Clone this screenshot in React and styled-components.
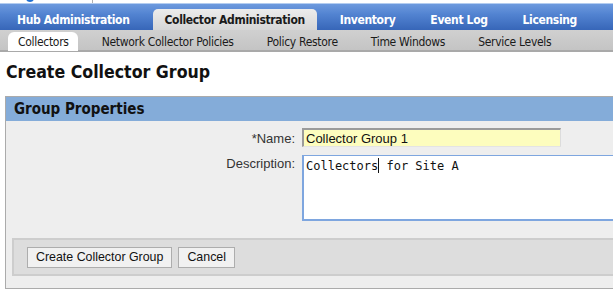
import React from "react";
import styled, { createGlobalStyle } from "styled-components";

const TAHOMA = `"DejaVu Sans Condensed", "DejaVu Sans", sans-serif`;
const ARIAL = `"Liberation Sans", Arial, sans-serif`;
const MONO = `"DejaVu Sans Mono", "Liberation Mono", monospace`;

const Global = createGlobalStyle`
  html, body { margin: 0; padding: 0; background: #ffffff; overflow: hidden; }
  body { font-family: ${TAHOMA}; color: #111; }
  * { box-sizing: border-box; }
`;

const Page = styled.div`
  width: 613px;
  height: 291px;
  overflow: hidden;
  display: flex;
  flex-direction: column;
`;

const TopStrip = styled.div`
  height: 3px;
  overflow: hidden;
  background: #fff;
  display: flex;
`;

const MainTabs = styled.nav`
  height: 27px;
  display: flex;
  align-items: flex-end;
  gap: 11px;
  padding-left: 5px;
  border-top: 1px solid #b4cdf0;
  background: linear-gradient(#6d9ade, #5283d1 40%, #3766b8);
`;

const MainTab = styled.div`
  height: 21px;
  padding: 0 12px;
  display: flex;
  align-items: center;
  font-family: ${TAHOMA};
  font-weight: bold;
  font-size: 12px;
  letter-spacing: -0.35px;
  white-space: nowrap;
  border-radius: 5px 5px 0 0;
  color: ${(p) => (p.$active ? "#1a1a1a" : "#ffffff")};
  background: ${(p) => (p.$active ? "linear-gradient(#ececec, #d6d6d6)" : "transparent")};
`;

const SubTabs = styled.nav`
  height: 22px;
  display: flex;
  align-items: flex-end;
  gap: 14px;
  padding-left: 8px;
  background: linear-gradient(#d0d0d0, #c4c4c4);
  border-bottom: 2px solid #a9a9a9;
`;

const SubTab = styled.div`
  height: 19px;
  margin-bottom: -1px;
  padding: 0 9px 0 10px;
  display: flex;
  align-items: center;
  font-family: ${TAHOMA};
  font-size: 12px;
  letter-spacing: -0.3px;
  white-space: nowrap;
  color: #1a1a1a;
  border-radius: 6px 6px 0 0;
  background: ${(p) => (p.$active ? "#ffffff" : "transparent")};
`;

const Title = styled.h1`
  margin: 0;
  padding: 8px 6px 0;
  height: 44px;
  line-height: 24px;
  font-family: ${TAHOMA};
  font-size: 17.6px;
  font-weight: bold;
  color: #111;
`;

const Panel = styled.section`
  margin-left: 5px;
  width: 660px;
  border: 1px solid #ababab;
  background: #eeeeee;
`;

const PanelHeader = styled.h2`
  margin: 0;
  height: 24px;
  line-height: 24px;
  padding-left: 8px;
  background: #84acd9;
  font-family: ${TAHOMA};
  font-size: 15px;
  font-weight: bold;
  color: #111;
`;

const PanelBody = styled.div`
  padding: 7px 0 12px 6px;
`;

const Form = styled.div`
  display: grid;
  grid-template-columns: 283px auto;
  column-gap: 7px;
  row-gap: 8px;
  align-items: start;
  margin-bottom: 17px;
`;

const Label = styled.label`
  text-align: right;
  font-family: ${ARIAL};
  font-size: 13px;
  color: #333;
  padding-top: ${(p) => p.$top}px;
`;

const TextInput = styled.input`
  width: 259px;
  height: 19px;
  margin: 0;
  padding: 0 0 0 2px;
  font-family: ${ARIAL};
  font-size: 13px;
  color: #111;
  background: #fdfdbe;
  border-style: solid;
  border-width: 2px 1px 1px 2px;
  border-color: #9b9b9b #dcdcdc #e4e4e4 #9b9b9b;
  outline: none;
`;

const TextArea = styled.div`
  width: 330px;
  height: 66px;
  padding: 2px 2px;
  font-family: ${MONO};
  font-size: 12px;
  line-height: 16px;
  color: #111;
  background: #ffffff;
  border: 2px solid #7ea6df;
  border-width: 1px 2px 2px 2px;
  white-space: pre;
`;

const Caret = styled.span`
  display: inline-block;
  width: 1px;
  height: 15px;
  background: #111;
  vertical-align: -3px;
`;

const ButtonBar = styled.div`
  height: 38px;
  display: flex;
  align-items: center;
  gap: 6px;
  padding-left: 13px;
  background: #dddddd;
  border: 2px solid #cdcdcd;
`;

const Button = styled.button`
  height: 21px;
  margin: 0;
  padding: 0 8px;
  font-family: ${ARIAL};
  font-size: 12.4px;
  color: #111;
  background: #f1f1f1;
  border: 1px solid #adadad;
  border-radius: 0;
`;

export default function App() {
  const mainTabs = ["Hub Administration", "Collector Administration", "Inventory", "Event Log", "Licensing"];
  const subTabs = ["Collectors", "Network Collector Policies", "Policy Restore", "Time Windows", "Service Levels"];
  return (
    <>
      <Global />
      <Page>
        <TopStrip>
          <svg width="120" height="3" viewBox="0 0 120 3">
            <circle cx="30" cy="-2" r="4" fill="#1f6fd1" />
            <rect x="92" y="0" width="1" height="3" fill="#b0b0b0" />
          </svg>
        </TopStrip>
        <MainTabs>
          {mainTabs.map((t, i) => (
            <MainTab key={t} $active={i === 1}>{t}</MainTab>
          ))}
        </MainTabs>
        <SubTabs>
          {subTabs.map((t, i) => (
            <SubTab key={t} $active={i === 0}>{t}</SubTab>
          ))}
        </SubTabs>
        <Title>Create Collector Group</Title>
        <Panel>
          <PanelHeader>Group Properties</PanelHeader>
          <PanelBody>
            <Form>
              <Label $top={3}>*Name:</Label>
              <TextInput defaultValue="Collector Group 1" readOnly />
              <Label $top={1}>Description:</Label>
              <TextArea>Collectors<Caret /> for Site A</TextArea>
            </Form>
            <ButtonBar>
              <Button>Create Collector Group</Button>
              <Button>Cancel</Button>
            </ButtonBar>
          </PanelBody>
        </Panel>
      </Page>
    </>
  );
}
